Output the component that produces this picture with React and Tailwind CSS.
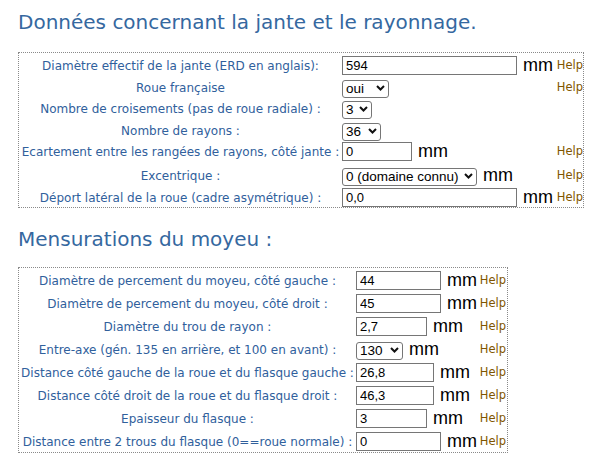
const jante = [
  { label: 'Diamètre effectif de la jante (ERD en anglais):', kind: 'input', w: 'w-[175px]', value: '594', mm: true, help: true, h: 'h-[22px]' },
  { label: 'Roue française', kind: 'select', w: 'w-[47px]', value: 'oui', mm: false, help: true, h: 'h-[21px]' },
  { label: 'Nombre de croisements (pas de roue radiale) :', kind: 'select', w: 'w-[30px]', value: '3', mm: false, help: false, h: 'h-[22px]' },
  { label: 'Nombre de rayons :', kind: 'select', w: 'w-[39px]', value: '36', mm: false, help: false, h: 'h-[21px]' },
  { label: 'Ecartement entre les rangées de rayons, côté jante :', kind: 'input', w: 'w-[70px]', value: '0', mm: true, help: true, h: 'h-[24px]' },
  { label: 'Excentrique :', kind: 'select', w: 'w-[135px]', value: '0 (domaine connu)', mm: true, help: true, h: 'h-[22px]' },
  { label: 'Déport latéral de la roue (cadre asymétrique) :', kind: 'input', w: 'w-[175px]', value: '0,0', mm: true, help: true, h: 'h-[19px]' },
]

const moyeu = [
  { label: 'Diamètre de percement du moyeu, côté gauche :', kind: 'input', w: 'w-[85px]', value: '44' },
  { label: 'Diamètre de percement du moyeu, côté droit :', kind: 'input', w: 'w-[85px]', value: '45' },
  { label: 'Diamètre du trou de rayon :', kind: 'input', w: 'w-[71px]', value: '2,7' },
  { label: 'Entre-axe (gén. 135 en arrière, et 100 en avant) :', kind: 'select', w: 'w-[47px]', value: '130' },
  { label: 'Distance côté gauche de la roue et du flasque gauche :', kind: 'input', w: 'w-[78px]', value: '26,8' },
  { label: 'Distance côté droit de la roue et du flasque droit :', kind: 'input', w: 'w-[78px]', value: '46,3' },
  { label: 'Epaisseur du flasque :', kind: 'input', w: 'w-[71px]', value: '3' },
  { label: 'Distance entre 2 trous du flasque (0==roue normale) :', kind: 'input', w: 'w-[85px]', value: '0' },
]

function Chevron() {
  return (
    <svg width="9" height="6" viewBox="0 0 9 6" className="pointer-events-none absolute right-[4px] top-1/2 -translate-y-1/2">
      <path d="M1 1l3.5 3.5L8 1" fill="none" stroke="#111" strokeWidth="2" />
    </svg>
  )
}

function Control({ kind, w, value }) {
  if (kind === 'select') {
    return (
      <div className="relative">
        <select
          defaultValue={value}
          className={`${w} h-[18px] appearance-none rounded-[3px] border border-[#767676] bg-white pl-[3px] text-[13.5px] leading-[16px] text-black font-['Liberation_Sans',Arial,sans-serif] outline-none`}
        >
          <option value={value}>{value}</option>
        </select>
        <Chevron />
      </div>
    )
  }
  return (
    <input
      defaultValue={value}
      className={`${w} h-[19px] border border-[#767676] bg-white px-[3px] text-[13px] text-black font-['Liberation_Sans',Arial,sans-serif] outline-none`}
    />
  )
}

function Row({ row, labelW, ctlW, h }) {
  return (
    <div className={`flex items-start ${h}`}>
      <div className={`${labelW} flex h-[19px] items-center justify-center text-center text-[12px] text-[#30609c] whitespace-nowrap`}>
        {row.label}
      </div>
      <div className={`${ctlW} flex h-[19px] items-center`}>
        <Control kind={row.kind} w={row.w} value={row.value} />
        {row.mm && (
          <span className="ml-[6px] text-[18px] leading-[19px] text-black font-['Liberation_Sans',Arial,sans-serif]">mm</span>
        )}
      </div>
      <div className="flex h-[19px] flex-1 items-center justify-end">
        {row.help && <span className="text-[11.5px] text-[#7f5500]">Help</span>}
      </div>
    </div>
  )
}

export default function App() {
  return (
    <div className="min-h-[462px] bg-white pl-[18px] pt-[11px] font-['DejaVu_Sans',Verdana,sans-serif]">
      <h1 className="text-[20px] leading-[23px] text-[#35689f]">Données concernant la jante et le rayonnage.</h1>

      <div className="mt-[18px] w-[566px] border border-dotted border-[#8a8a8a] pt-[3px]">
        {jante.map((row) => (
          <Row key={row.label} row={row} labelW="w-[323px]" ctlW="w-[213px]" h={row.h} />
        ))}
      </div>

      <h2 className="mt-[20px] text-[20px] leading-[23px] text-[#35689f]">Mensurations du moyeu :</h2>

      <div className="mt-[16px] w-[490px] border border-dotted border-[#8a8a8a] pr-[1px] pt-[3px]">
        {moyeu.map((row, i) => (
          <Row
            key={row.label}
            row={{ ...row, mm: true, help: true }}
            labelW="w-[337px]"
            ctlW="w-[123px]"
            h={i === moyeu.length - 1 ? 'h-[20px]' : 'h-[23px]'}
          />
        ))}
      </div>
    </div>
  )
}
